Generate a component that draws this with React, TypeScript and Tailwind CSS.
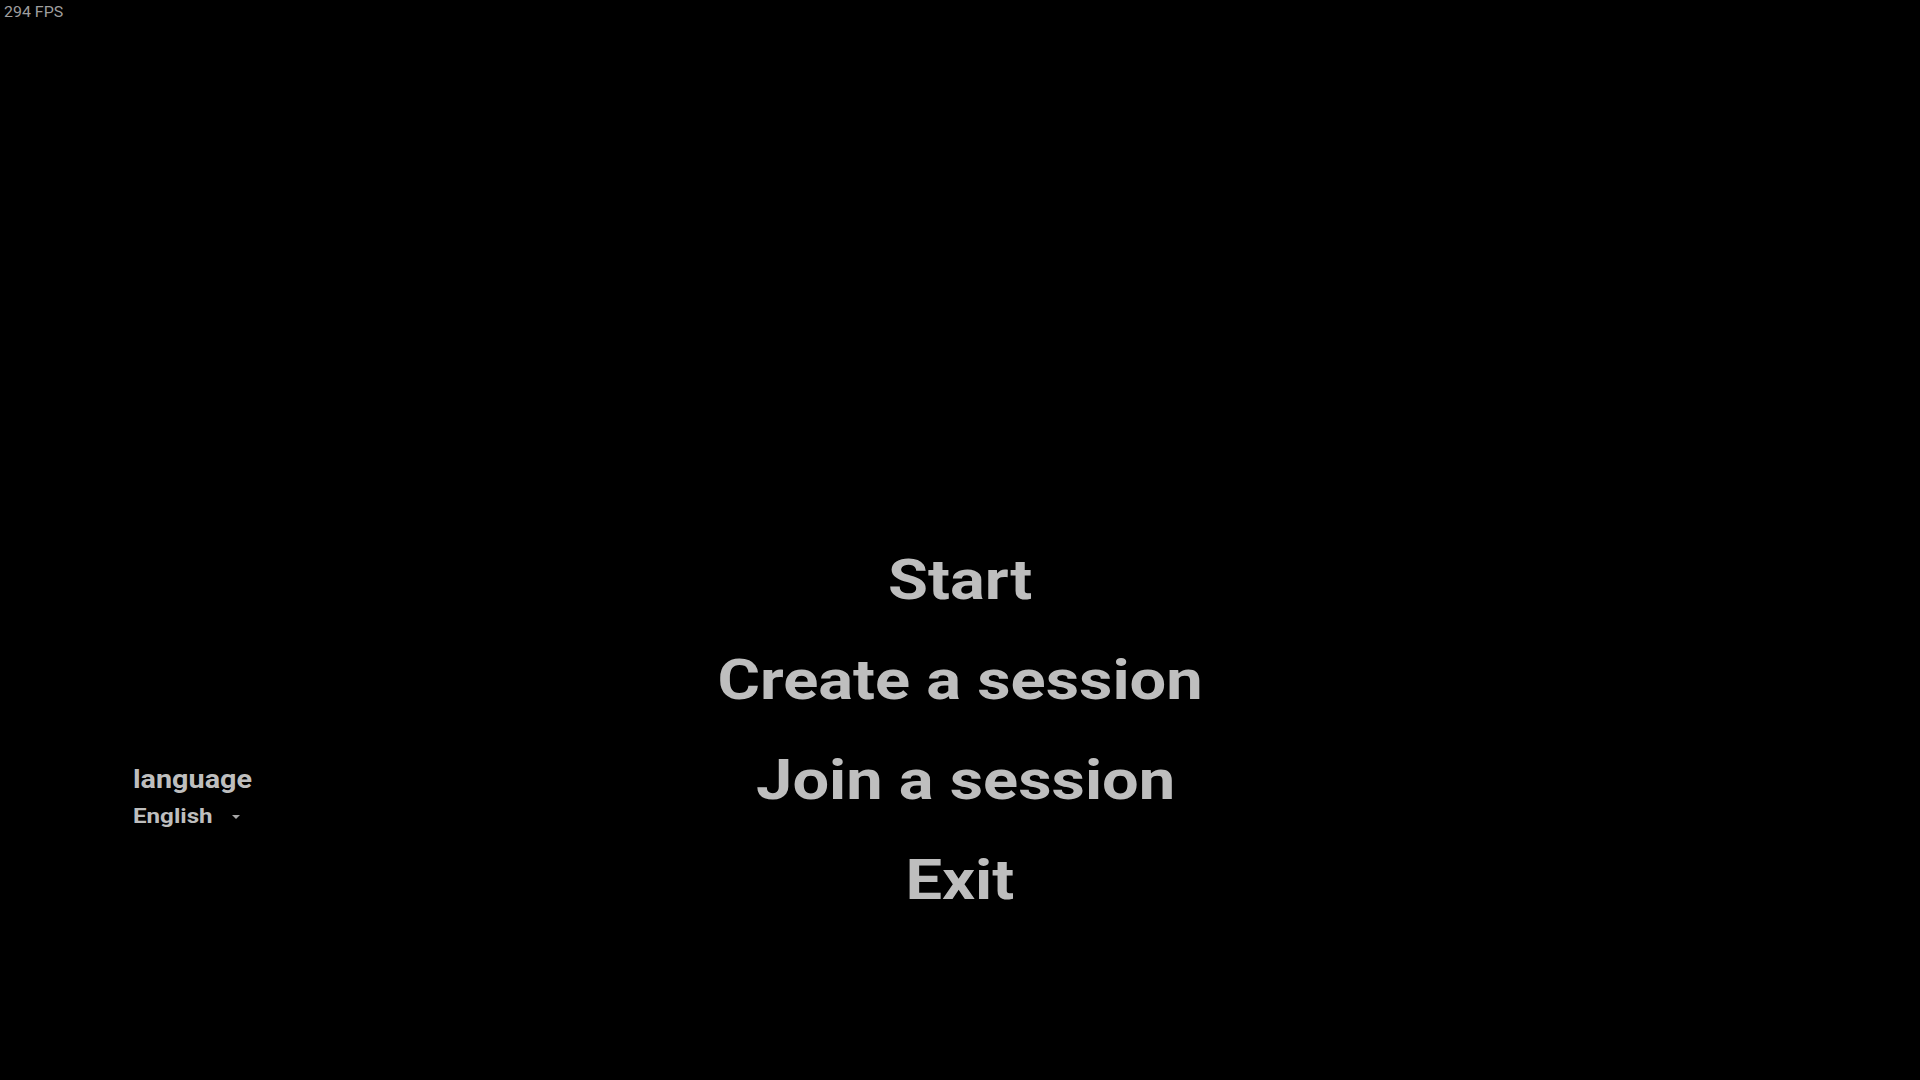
import { FC } from "react";

const menuItems = [
    { label: "Start", shift: "" },
    { label: "Create a session", shift: "" },
    { label: "Join a session", shift: "pl-[12px]" },
    { label: "Exit", shift: "" },
];

const MenuButton: FC<{ label: string; shift: string }> = ({ label, shift }) => {
    return (
        <button className={`block leading-[100px] text-[56px] font-bold text-[#bebebe] ${shift}`}>
            <span className="inline-block scale-x-[1.16] origin-center">{label}</span>
        </button>
    );
};

const LanguagePicker: FC = () => {
    return (
        <div className="flex flex-col items-start pl-[133px]">
            <span className="inline-block scale-x-[1.15] origin-left text-[25px] leading-[30px] font-bold text-[#bebebe]">
                language
            </span>
            <div className="flex flex-row items-center mt-[7px]">
                <span className="inline-block scale-x-[1.15] origin-left text-[21px] leading-[28px] font-bold text-[#bebebe]">
                    English
                </span>
                {/* dropdown caret */}
                <svg width="8" height="4" viewBox="0 0 8 4" className="ml-[30px] mt-[1px]">
                    <path d="M0 0 L8 0 L4 4 Z" fill="#a6a6a6" />
                </svg>
            </div>
        </div>
    );
};

export default function App() {
    return (
        <div
            className="relative w-[1920px] h-[1080px] bg-black overflow-hidden"
            style={{ fontFamily: "Roboto, 'Noto Sans', sans-serif" }}
        >
            {/* fps counter */}
            <div className="absolute top-[4px] left-[4px] text-[14px] leading-[16px] text-[#9e9e9e]">
                <span className="inline-block scale-x-[1.14] origin-left">294 FPS</span>
            </div>

            <div className="grid grid-cols-[1fr_auto_1fr] pt-[530px]">
                <div className="pt-[235px]">
                    <LanguagePicker />
                </div>
                <div className="flex flex-col items-center">
                    {menuItems.map((item) => (
                        <MenuButton key={item.label} label={item.label} shift={item.shift} />
                    ))}
                </div>
                <div />
            </div>
        </div>
    );
}
